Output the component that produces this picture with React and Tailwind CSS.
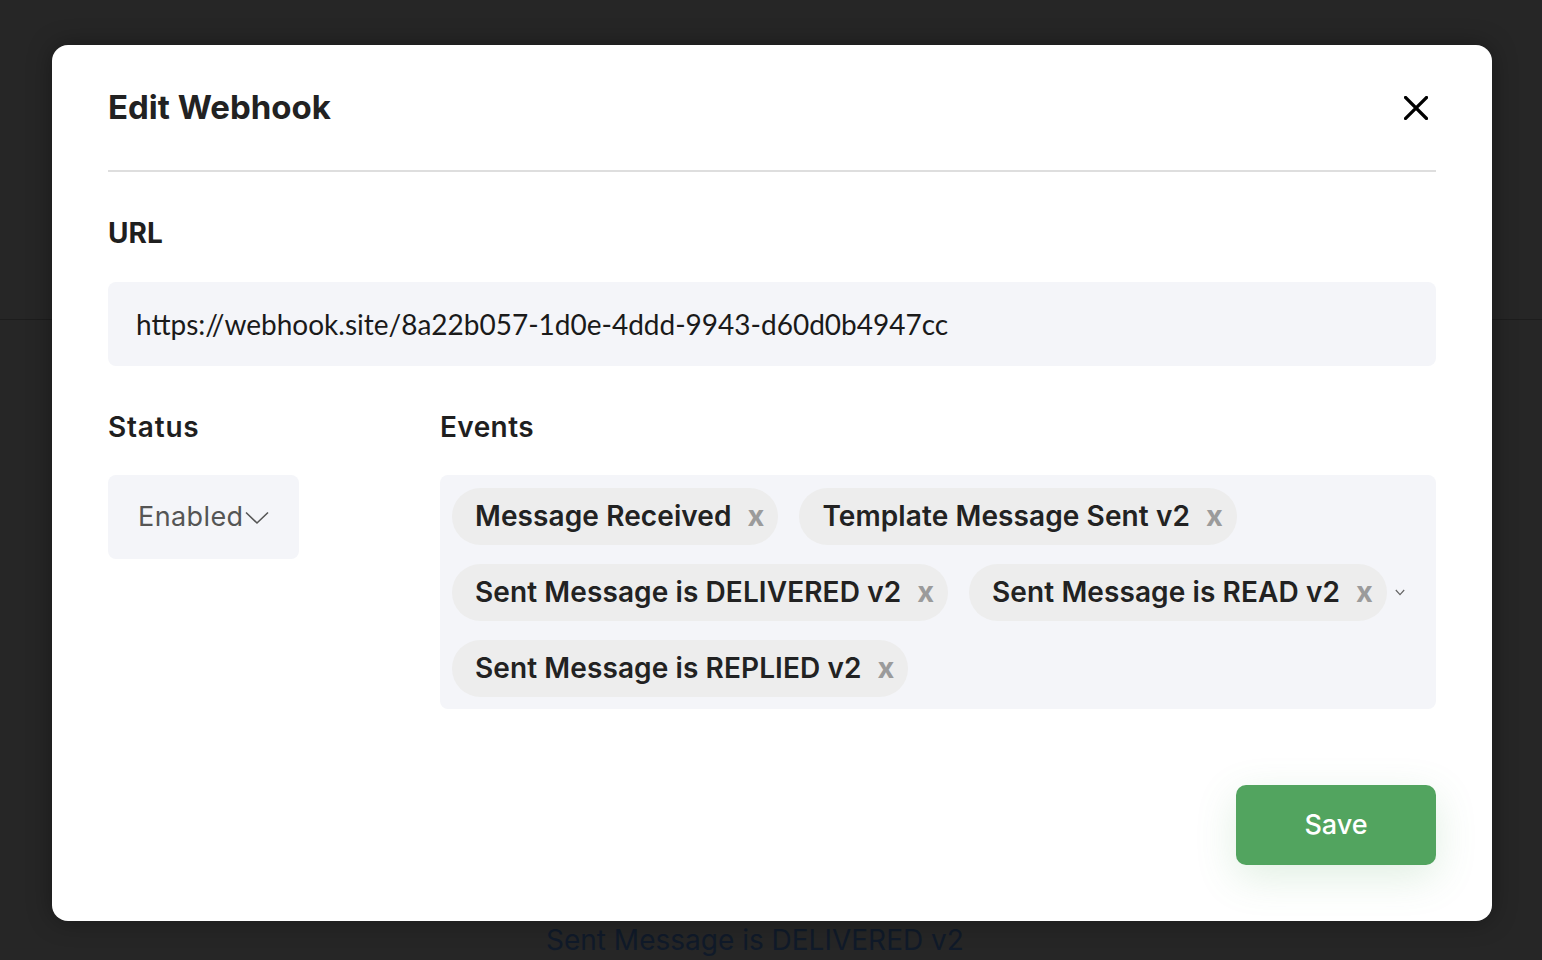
import React from "react";

const chips = [
  "Message Received",
  "Template Message Sent v2",
  "Sent Message is DELIVERED v2",
  "Sent Message is READ v2",
  "Sent Message is REPLIED v2",
];

function Chip({ label }) {
  return (
    <div className="flex items-center h-[57px] rounded-full bg-[#ededed] pl-[23px] pr-[14px]">
      <span className="text-[28px] font-semibold text-[#222222] tracking-[0.1px]">{label}</span>
      <span className="ml-[16px] text-[29px] font-bold text-[#9b9b9b] leading-none pb-[2px]">x</span>
    </div>
  );
}

export default function App() {
  return (
    <div
      className="relative w-full h-[960px] overflow-hidden bg-[#262626]"
      style={{ fontFamily: "Inter, 'Noto Sans', sans-serif" }}
    >
      {/* underlying page (dimmed) */}
      <div className="h-[320px] border-b border-[#1d1d1d]" />
      <div className="pt-[600px] pl-[546px] text-[28px] leading-[40px] text-[#101a29]">
        Sent Message is DELIVERED v2
      </div>

      {/* modal */}
      <div className="absolute left-[52px] top-[45px] w-[1440px] h-[876px] rounded-[16px] bg-white px-[56px] shadow-[0_0_24px_rgba(0,0,0,0.35)] flex flex-col">
        <div className="flex items-center justify-between h-[125px]">
          <h1 className="text-[33px] font-bold text-[#222222] tracking-[0px]">Edit Webhook</h1>
          <svg width="24" height="24" viewBox="0 0 24 24" className="mr-[8px]">
            <path d="M1.5 1.5 L22.5 22.5 M22.5 1.5 L1.5 22.5" stroke="#000" strokeWidth="3.2" strokeLinecap="square" fill="none" />
          </svg>
        </div>
        <div className="h-[2px] bg-[#dedede]" />

        <div className="mt-[43px] text-[28px] leading-[36px] font-bold text-[#1f1f1f]">URL</div>
        <div className="mt-[31px] h-[84px] rounded-[8px] bg-[#f4f5f9] flex items-center pl-[28px]">
          <span className="text-[28px] text-[#1a1a1a]" style={{ fontFamily: "Lato, 'Noto Sans', sans-serif" }}>
            https://webhook.site/8a22b057-1d0e-4ddd-9943-d60d0b4947cc
          </span>
        </div>

        <div className="mt-[43px] flex">
          <div className="w-[332px] shrink-0">
            <div className="text-[28px] leading-[36px] font-semibold text-[#1f1f1f] tracking-[0.8px]">Status</div>
            <div className="mt-[30px] w-[191px] h-[84px] rounded-[8px] bg-[#f4f5f9] flex items-center pl-[30px]">
              <span className="text-[27px] text-[#555555] tracking-[0.4px]">Enabled</span>
              <svg width="24" height="14" viewBox="0 0 24 14" className="ml-[1px] mt-[2px]">
                <path d="M1 1.5 L12 12 L23 1.5" stroke="#555" strokeWidth="1.6" fill="none" />
              </svg>
            </div>
          </div>
          <div className="flex-1">
            <div className="text-[28px] leading-[36px] font-semibold text-[#1f1f1f] tracking-[0.4px]">Events</div>
            <div className="mt-[30px] min-h-[234px] rounded-[8px] bg-[#f4f5f9] flex items-center pl-[12px] py-[12px] pr-[31px]">
              <div className="flex-1 flex flex-wrap gap-x-[21px] gap-y-[19px]">
                {chips.map((c) => (
                  <Chip key={c} label={c} />
                ))}
              </div>
              <svg width="10" height="7" viewBox="0 0 10 7" className="ml-[4px] shrink-0">
                <path d="M0.8 1 L5 5.6 L9.2 1" stroke="#666" strokeWidth="1.2" fill="none" />
              </svg>
            </div>
          </div>
        </div>

        <div className="mt-[76px] flex justify-end">
          <button className="w-[200px] h-[80px] rounded-[10px] bg-[#52a45f] text-white text-[27px] font-medium shadow-[0_12px_40px_rgba(82,164,95,0.18)]">
            Save
          </button>
        </div>
      </div>
    </div>
  );
}
